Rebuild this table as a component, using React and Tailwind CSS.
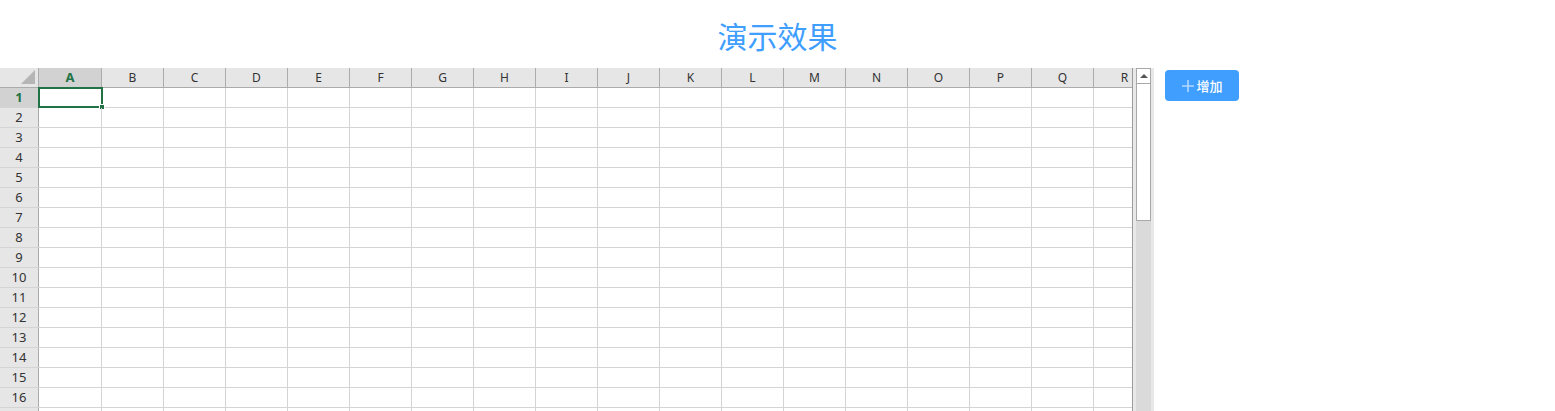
import React from "react";

const cols = "ABCDEFGHIJKLMNOPQR".split("");
const rows = Array.from({ length: 17 }, (_, i) => i + 1);

export default function App() {
  return (
    <div className="w-[1555px] h-[411px] overflow-hidden bg-white font-['Noto_Sans','Noto_Sans_CJK_SC',sans-serif]">
      {/* 标题 */}
      <div className="h-[68px] flex items-center justify-center">
        <h2 className="text-[30px] leading-none text-[#409eff] font-['Noto_Sans_CJK_SC',sans-serif] font-normal pt-[1px]">
          演示效果
        </h2>
      </div>

      <div className="flex items-start">
        {/* 表格 */}
        <div className="w-[1133px] overflow-hidden border-r border-[#9c9c9c] h-[343px]">
          <div className="flex h-[20px] bg-[#e6e6e6] border-b border-[#ababab] w-max">
            <div className="w-[39px] h-full border-r border-[#ababab] relative">
              <div className="absolute right-[3px] bottom-[3px] w-0 h-0 border-l-[14px] border-l-transparent border-b-[14px] border-b-[#b5b5b5]" />
            </div>
            {cols.map((c) => (
              <div
                key={c}
                className={
                  c === "A"
                    ? "w-[63px] h-full border-r border-[#ababab] bg-[#d2d2d2] flex items-center justify-center text-[13px] font-bold text-[#217346]"
                    : "w-[62px] h-full border-r border-[#ababab] flex items-center justify-center text-[12px] text-[#333]"
                }
              >
                {c}
              </div>
            ))}
          </div>
          {rows.map((r) => (
            <div key={r} className="flex h-[20px] border-b border-[#d4d4d4] w-max relative">
              <div
                className={
                  r === 1
                    ? "w-[39px] h-full border-r border-[#ababab] bg-[#d2d2d2] flex items-center justify-center text-[13px] font-bold text-[#217346]"
                    : "w-[39px] h-full border-r border-[#ababab] bg-[#e6e6e6] flex items-center justify-center text-[13px] text-[#333]"
                }
              >
                {r}
              </div>
              {cols.map((c) => (
                <div
                  key={c}
                  className={
                    c === "A"
                      ? "w-[63px] h-full border-r border-[#d4d4d4]"
                      : "w-[62px] h-full border-r border-[#d4d4d4]"
                  }
                />
              ))}
              {r === 1 && (
                <div className="absolute left-[38px] top-[-1px] w-[65px] h-[21px] border-2 border-[#217346]">
                  <div className="absolute right-[-4px] bottom-[-4px] w-[6px] h-[6px] bg-[#217346] border border-white" />
                </div>
              )}
            </div>
          ))}
        </div>

        {/* 滚动条 */}
        <div className="w-[21px] h-[343px] bg-[#e8e8e8] flex flex-col px-[3px]">
          <div className="h-[16px] bg-white border border-[#a8a8a8] flex items-center justify-center">
            <div className="w-0 h-0 border-l-[4px] border-l-transparent border-r-[4px] border-r-transparent border-b-[4px] border-b-[#555]" />
          </div>
          <div className="h-[137px] bg-white border border-[#a8a8a8] border-t-0" />
          <div className="flex-1 bg-[#dadada]" />
        </div>

        {/* 按钮 */}
        <div className="pl-[11px] pt-[2px]">
          <button className="w-[74px] h-[31px] bg-[#409eff] rounded-[4px] text-white text-[13px] flex items-center justify-center gap-[1px] font-['Noto_Sans_CJK_SC',sans-serif]">
            <svg width="14" height="14" viewBox="0 0 14 14" className="text-[#b3d8ff]">
              <path d="M7 1v12M1 7h12" stroke="currentColor" strokeWidth="1.6" />
            </svg>
            <span className="font-medium">增加</span>
          </button>
        </div>
      </div>
    </div>
  );
}
